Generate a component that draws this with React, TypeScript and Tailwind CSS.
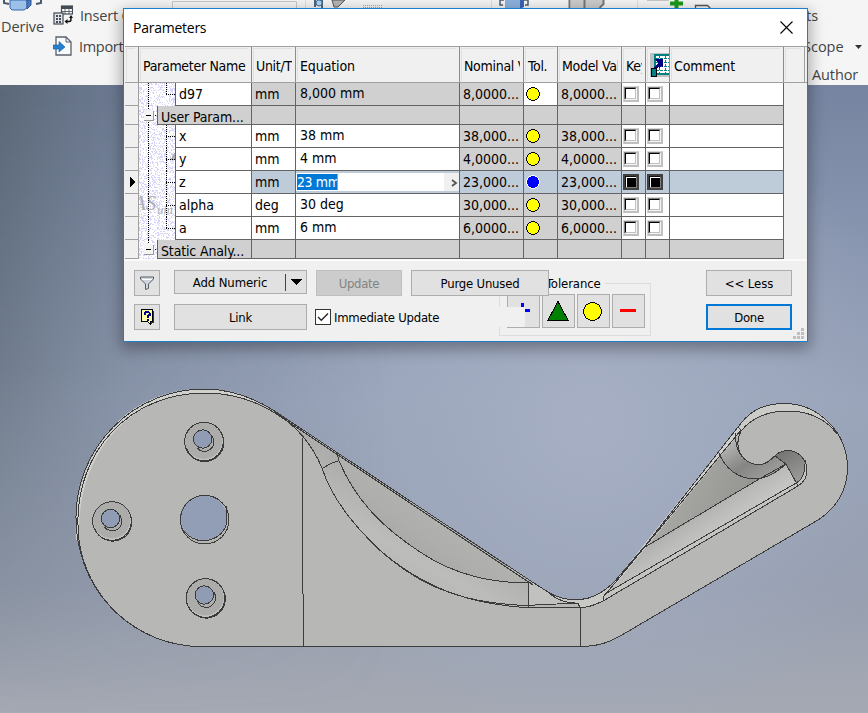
import React from "react";

const TAHOMA = "font-['DejaVu_Sans_Condensed','DejaVu_Sans',sans-serif]";
const SEGOE = "font-['Open_Sans','Noto_Sans',sans-serif]";

type Row = {
  name: string;
  group?: boolean;
  unit?: string;
  eq?: string;
  value?: string;
  selected?: boolean;
  readOnly?: boolean;
};

const rows: Row[] = [
  { name: "d97", unit: "mm", eq: "8,000 mm", value: "8,0000...", readOnly: true },
  { name: "User Param...", group: true },
  { name: "x", unit: "mm", eq: "38 mm", value: "38,000..." },
  { name: "y", unit: "mm", eq: "4 mm", value: "4,0000..." },
  { name: "z", unit: "mm", eq: "23 mm", value: "23,000...", selected: true },
  { name: "alpha", unit: "deg", eq: "30 deg", value: "30,000..." },
  { name: "a", unit: "mm", eq: "6 mm", value: "6,0000..." },
  { name: "Static Analy...", group: true },
];

const COLS = "grid grid-cols-[14px_113px_44px_164px_64px_34px_64px_24px_24px_114px_21px]";

function speckles(seed: number, w: number, h: number) {
  let s = seed * 7919 + 13;
  let d = "";
  for (let y = 0; y < h; y++) {
    for (let x = 0; x < w; x++) {
      s = (s * 1103515245 + 12345) % 2147483648;
      if (s / 2147483648 < 0.3) d += `M${x} ${y + 0.5}h1`;
    }
  }
  return d;
}

function Tree({ index, row }: { index: number; row: Row }) {
  const w = row.group ? 18 : 36;
  const h = row.group ? 19 : 23;
  const mid = row.group ? 9.5 : 11.5;
  const last = row.name === "d97" || row.name === "a";
  return (
    <svg width={w} height={h} className="block shrink-0 bg-white" shapeRendering="crispEdges">
      <path d={speckles(index + 1, w, h)} stroke="#d7d4fb" strokeWidth="1" />
      {row.name === "alpha" && (
        <g fill="#b0b0b0" fontFamily="Liberation Serif, serif" fontStyle="italic">
          <text x="-6" y="16" fontSize="21">AS</text>
          <text x="18" y="20" fontSize="13">um</text>
        </g>
      )}
      {row.name === "y" && <path d="M31 12l5-8v8z" fill="#b0b0b0" />}
      <path
        d={`M9.500 0V${row.name.startsWith("Static") ? 9 : h}`}
        stroke="#000"
        strokeDasharray="1 1"
      />
      {row.group ? (
        <>
          <path d={`M14 ${mid}h4`} stroke="#000" strokeDasharray="1 1" />
          <rect x="5" y="4" width="9" height="10" fill="#f4f4f4" />
          <path d="M5 14.500h9.500v-10" stroke="#999" fill="none" />
          <path d="M7 9.500h5" stroke="#000" />
        </>
      ) : (
        <path
          d={`M27.500 0V${last ? mid : h}M27 ${mid}h9`}
          stroke="#000"
          strokeDasharray="1 1"
          fill="none"
        />
      )}
    </svg>
  );
}

function Dot({ selected }: { selected?: boolean }) {
  return (
    <svg width="14" height="14" className="ml-[2px]" shapeRendering="crispEdges">
      <circle
        cx="7"
        cy="7"
        r="6.400"
        fill={selected ? "#0000ff" : "#ffff00"}
        stroke={selected ? "#fff" : "#000"}
      />
    </svg>
  );
}

function Check({ selected }: { selected?: boolean }) {
  if (selected)
    return (
      <div className="ml-px flex h-4 w-4 items-center justify-center bg-[#404040]">
        <div className="h-3 w-3 border border-[#808080] border-l-[#111] border-t-[#111] bg-black">
          <div className="h-full w-full border-l border-t border-white" />
        </div>
      </div>
    );
  return (
    <div className="ml-px h-4 w-4 border-b-2 border-l border-r-2 border-t border-[#c0c0c0] border-l-[#d8d8d8] border-t-[#d8d8d8]">
      <div className="h-[13px] w-[13px] border border-[#f4f4f4] border-l-[#808080] border-t-[#808080] bg-white">
        <div className="h-full w-full border border-[#c0c0c0] border-l-black border-t-black" />
      </div>
    </div>
  );
}

function Cell({ bg, children }: { bg: string; children?: React.ReactNode }) {
  return (
    <div
      className={`flex min-w-0 items-center overflow-hidden whitespace-nowrap border-b border-r border-[#646464] ${bg}`}
    >
      {children}
    </div>
  );
}

function ParamRow({ row, index }: { row: Row; index: number }) {
  const sel = row.selected ? "bg-[#becbd9]" : "";
  const gray = sel || "bg-[#d0d0d0]";
  const white = sel || (row.group ? "bg-[#d0d0d0]" : "bg-white");
  const ro = row.readOnly ? "bg-[#d0d0d0]" : white;
  return (
    <div className={`${COLS} ${row.group ? "h-[19px]" : "h-[23px]"}`}>
      <div className="flex items-center border-b border-r border-[#a0a0a0] bg-[#f0f0f0] pl-[5px]">
        {row.selected && (
          <svg width="6" height="10" shapeRendering="crispEdges">
            <path d="M0 0l5 5-5 5z" />
          </svg>
        )}
      </div>
      <div className="flex min-w-0 overflow-hidden border-r border-[#646464]">
        <Tree index={index} row={row} />
        <div
          className={`flex flex-1 items-center whitespace-nowrap border-b border-l border-[#646464] pl-[3px] ${
            row.group ? "bg-[#d0d0d0] pt-[3px]" : "bg-white"
          }`}
        >
          <span className={row.group ? "tracking-[-0.15px]" : ""}>{row.name}</span>
        </div>
      </div>
      <Cell bg={row.readOnly ? gray : white}>
        <span className="pl-[3px]">{row.unit}</span>
      </Cell>
      {row.selected ? (
        <Cell bg="bg-[#becbd9]">
          <div className="flex h-[18px] w-full items-center bg-white pl-px">
            <span className="flex h-4 w-[40px] items-center bg-[#0078d7] tracking-[-0.4px] text-white">
              {row.eq}
            </span>
            <span className="h-4 w-px bg-[#ff8728]" />
            <span className="ml-auto flex h-full w-[15px] items-center justify-end bg-[#f0f0f0] pr-px pt-[2px]">
              <svg width="7" height="8" fill="none" stroke="#555" strokeWidth="1.800">
                <path d="M1 1l4 3-4 3" />
              </svg>
            </span>
          </div>
        </Cell>
      ) : (
        <Cell bg={ro}>
          <span className="pb-[2px] pl-1">{row.eq}</span>
        </Cell>
      )}
      <Cell bg={gray}>
        <span className="pl-[3px]">{row.value}</span>
      </Cell>
      <Cell bg={row.readOnly ? "bg-white" : gray}>{!row.group && <Dot selected={row.selected} />}</Cell>
      <Cell bg={gray}>
        <span className="pl-[3px]">{row.value}</span>
      </Cell>
      <Cell bg={white}>{!row.group && <Check selected={row.selected} />}</Cell>
      <Cell bg={white}>{!row.group && <Check selected={row.selected} />}</Cell>
      <Cell bg={white} />
      <div className="bg-[#f0f0f0]" />
    </div>
  );
}

function HeaderCell({
  children,
  last,
  flush,
}: {
  children?: React.ReactNode;
  last?: boolean;
  flush?: boolean;
}) {
  return (
    <div
      className={`flex min-w-0 border-r bg-[#f0f0f0] ${last ? "border-[#a0a0a0]" : "border-[#8c8c8c]"}`}
    >
      <div
        className={`mb-px ml-px mt-px flex min-w-0 flex-1 items-center overflow-hidden whitespace-nowrap border-l border-t border-[#e0e0e0] pl-[2px] ${
          flush ? "" : "mr-[3px] pt-[2px]"
        }`}
      >
        {children}
      </div>
    </div>
  );
}

function ExportIcon() {
  return (
    <svg width="20" height="24" className="shrink-0" shapeRendering="crispEdges">
      <rect x="0" y="0" width="20" height="24" fill="#c0c0c0" />
      <rect x="4" y="1" width="16" height="20" fill="#fff" />
      <path d="M4.500 1v20M4 1.500h16M4 20.500h16" stroke="#008080" strokeWidth="2" />
      <path d="M6 5.500h14M6 9.500h14M6 13.500h14M6 17.500h14" stroke="#008080" strokeDasharray="3 1" />
      <path d="M9.500 3v17M15.500 3v17" stroke="#008080" strokeDasharray="2 2" />
      <path d="M5 16l6-7" stroke="#000080" strokeWidth="3" />
      <path d="M5 6h8v9l-2-2-2 2-3-3 2-2z" fill="#000080" />
      <rect x="1.500" y="15" width="5" height="8" fill="#008080" stroke="#000" />
    </svg>
  );
}

function Button({ className, children }: { className: string; children?: React.ReactNode }) {
  return (
    <div className={`flex shrink-0 items-center justify-center border ${className}`}>
      {children}
    </div>
  );
}

function ToleranceGroup() {
  return (
    <div className="absolute left-[375px] top-[15px] h-[62px] w-[152px]">
      <div className="absolute inset-x-0 bottom-0 top-[9px] border border-[#dcdcdc]" />
      <div className="absolute left-[47px] top-px bg-[#f0f0f0] pr-1 leading-[18px] tracking-[-0.1px]">
        Tolerance
      </div>
      <div className="absolute left-[8px] top-[20px] flex gap-[2px]">
        <Button className="h-[34px] w-[33px] border-[#adadad] bg-[#e1e1e1]">
          <svg width="31" height="32" shapeRendering="crispEdges">
            <path d="M0 12h17v20H0z" fill="#f0f0f0" />
            <path d="M13 8h3v4h-3zM17 14h5v3h-5z" fill="#00f" />
          </svg>
        </Button>
        <Button className="h-[34px] w-[33px] border-[#adadad] bg-[#e1e1e1] pr-px">
          <svg width="24" height="22" shapeRendering="crispEdges">
            <path d="M12 1.500L22 20H2z" fill="#008000" stroke="#000" />
          </svg>
        </Button>
        <Button className="h-[34px] w-[33px] border-[#adadad] bg-[#e1e1e1] pr-[2px]">
          <svg width="19" height="19" shapeRendering="crispEdges">
            <circle cx="9.500" cy="9.500" r="9" fill="#ff0" stroke="#000" />
          </svg>
        </Button>
        <Button className="h-[34px] w-[33px] border-[#adadad] bg-[#e1e1e1] pr-px">
          <div className="h-[3px] w-4 -translate-y-px bg-[#ff0000]" />
        </Button>
      </div>
      <div className="absolute -left-px top-[33px] h-5 w-[10px] bg-[#f0f0f0]" />
    </div>
  );
}

function Dialog() {
  return (
    <div className="absolute left-[123px] top-[8px] flex h-[334px] w-[685px] flex-col border border-[#1a7fcd] bg-[#f0f0f0] shadow-[0_5px_14px_2px_rgba(0,0,0,0.32)]">
      <div
        className={`flex h-[37px] shrink-0 items-center justify-between bg-white pl-[9px] pr-[14px] ${SEGOE}`}
      >
        <span className="text-[14px] tracking-[-0.25px]">Parameters</span>
        <svg width="13" height="13" stroke="#000" fill="none" strokeWidth="1.100">
          <path d="M.5.5l12 12M12.500.5l-12 12" />
        </svg>
      </div>
      <div className={`ml-px text-[14px] leading-[16px] ${TAHOMA}`}>
        <div className={`${COLS} h-[37px] border-b border-t border-[#a0a0a0] tracking-[-0.3px]`}>
          <HeaderCell />
          <HeaderCell>Parameter Name</HeaderCell>
          <HeaderCell>Unit/T</HeaderCell>
          <HeaderCell>
            <span className="tracking-[-0.1px]">Equation</span>
          </HeaderCell>
          <HeaderCell>Nominal V</HeaderCell>
          <HeaderCell>Tol.</HeaderCell>
          <HeaderCell>Model Val</HeaderCell>
          <HeaderCell>Key</HeaderCell>
          <HeaderCell flush>
            <ExportIcon />
          </HeaderCell>
          <HeaderCell>
            <span className="tracking-[-0.1px]">Comment</span>
          </HeaderCell>
          <HeaderCell last />
        </div>
        {rows.map((r, i) => (
          <ParamRow key={r.name} row={r} index={i} />
        ))}
      </div>
      <div className={`relative flex-1 text-[13px] leading-[16px] ${TAHOMA}`}>
        <div className="h-[2px] bg-[#fafafa]" />
        <ToleranceGroup />
        <div className="relative flex pl-[10px] pt-[9px]">
          <Button className="h-[26px] w-[26px] border-[#adadad] bg-[#e1e1e1]">
            <svg width="16" height="16" fill="none">
              <path d="M1.500 2h13v2L9.500 9v4.500l-3 1V9l-5-5z" fill="#cfd6de" stroke="#56606b" />
              <path d="M3 4.500h10" stroke="#fff" />
            </svg>
          </Button>
          <Button className="ml-[14px] h-6 w-[133px] border-[#adadad] bg-[#e1e1e1]">
            <span className="flex-1 pt-px text-center tracking-[-0.1px]">Add Numeric</span>
            <span className="h-[17px] w-px bg-[#444]" />
            <svg width="20" height="8" shapeRendering="crispEdges">
              <path d="M4 1h12l-6 6z" />
            </svg>
          </Button>
          <Button className="ml-[9px] h-[26px] w-[86px] border-[#bfbfbf] bg-[#cccccc] pt-[2px] tracking-[-0.3px] text-[#838383]">
            Update
          </Button>
          <Button className="ml-[9px] h-[26px] w-[138px] border-[#adadad] bg-[#e1e1e1] pt-[2px] tracking-[-0.2px]">
            Purge Unused
          </Button>
          <Button className="ml-[157px] h-[26px] w-[86px] border-[#adadad] bg-[#e1e1e1] pt-[2px] tracking-[-0.1px]">
            &lt;&lt; Less
          </Button>
        </div>
        <div className="relative mt-2 flex w-[320px] items-center pl-[10px]">
          <Button className="h-[26px] w-[26px] border-[#adadad] bg-[#e1e1e1]">
            <svg width="16" height="18" shapeRendering="crispEdges">
              <path d="M2.500 1.500h11v12h-2v2.500l-3-2.500h-6z" fill="#ffffa8" stroke="#000" />
              <path d="M14.500 3v11h-2v2" stroke="#333" fill="none" />
              <path
                d="M5.500 6.500V5l1-1h3l1 1v2L8.500 8.500V10M8.500 11v1.500"
                stroke="#00008b"
                strokeWidth="2"
                fill="none"
              />
            </svg>
          </Button>
          <Button className="ml-[14px] h-[26px] w-[133px] border-[#adadad] bg-[#e1e1e1] pt-[2px] tracking-[-0.2px]">
            Link
          </Button>
          <div className="ml-2 flex h-4 w-4 shrink-0 items-center justify-center border border-[#333] bg-white">
            <svg width="12" height="10" fill="none" stroke="#222" strokeWidth="1.300">
              <path d="M1 5l3.300 3.300L11 1.500" />
            </svg>
          </div>
          <span className="ml-[3px] whitespace-nowrap pt-[2px] tracking-[-0.25px]">
            Immediate Update
          </span>
        </div>
        <div className="absolute left-[582px] top-[45px]">
          <Button className="h-[26px] w-[86px] border-2 border-[#0078d7] bg-[#e1e1e1] pt-[2px] tracking-[-0.3px]">
            Done
          </Button>
        </div>
        <svg width="11" height="11" className="absolute bottom-[2px] right-[3px]" fill="#bfbfbf">
          <path d="M8 0h3v3H8zM4 4h3v3H4zM8 4h3v3H8zM0 8h3v3H0zM4 8h3v3H4zM8 8h3v3H8z" />
        </svg>
      </div>
    </div>
  );
}

function Ribbon() {
  return (
    <div className={`flex h-[85px] bg-[#f5f5f5] text-[14.5px] leading-5 text-[#444] ${SEGOE}`}>
      <div className="flex w-[124px] shrink-0 overflow-hidden">
        <div className="flex w-[50px] flex-col">
          <svg width="50" height="17">
            <path d="M4 0v3l5 1M41 0v3l-5 1" stroke="#4a5a70" strokeWidth="2" fill="none" />
            <path d="M10 0h17v8l-3 2H12l-2-2z" fill="#9cc0e8" stroke="#3a68ac" />
            <path d="M27 0h4v5l-4 4z" fill="#4b79bd" stroke="#2f5698" />
          </svg>
          <span className="pl-px tracking-[-0.1px]">Derive</span>
        </div>
        <div className="flex flex-col gap-[11px] pl-[3px] pt-[6px]">
          <div className="flex h-5 items-center gap-[7px] whitespace-nowrap">
            <svg width="20" height="20" className="-translate-y-px" fill="none" stroke="#444b55" strokeWidth="1.200">
              <rect x="8.500" y="1" width="11" height="8" fill="#fff" />
              <path d="M8 2.500h12" strokeWidth="3" />
              <path d="M12 3v6M16 3v6M8.500 6.500h11" strokeWidth=".8" />
              <rect x="1" y="8" width="9" height="11" fill="#e3e6ea" />
              <path d="M3 11h2M3 14h2M3 17h2M6 11h2M6 14h2M6 17h2" strokeWidth="2" />
              <path d="M13 16.500h3c2 0 2-1 2-4" stroke="#111" strokeWidth="1.500" />
              <path d="M11.500 16.500l3-2.500v5zM18 10l2 3h-4z" fill="#111" stroke="none" />
            </svg>
            <span className="tracking-[-0.2px]">Insert C</span>
          </div>
          <div className="flex h-5 items-center gap-[6px]">
            <svg width="20" height="20" className="-translate-y-px" fill="none">
              <path d="M3 1h10l5 5v13H3z" fill="#f8fafc" stroke="#59616b" strokeWidth="1.300" />
              <path d="M13 1v5h5" stroke="#59616b" />
              <path d="M0 9h6V5.500l6 5.500-6 5V13H0z" fill="#2481d1" stroke="#155c9f" strokeWidth=".6" />
            </svg>
            <span className="tracking-[-0.3px]">Import</span>
          </div>
        </div>
      </div>
      <svg width="683" height="9" viewBox="124 0 683 9" className="shrink-0" fill="none">
        <path d="M172.500 9V1.500h124V9" stroke="#c8c8c8" />
        <path d="M305.500 0v9M491.500 0v9M637.500 0v9" stroke="#ddd" />
        <path d="M315 0v7M322 0v9" stroke="#50647f" strokeWidth="2" />
        <circle cx="319" cy="3" r="3" stroke="#3974a9" fill="#b6d4e6" />
        <path d="M332 0h13l-7 7h-4z" fill="#b5b5b5" stroke="#555" />
        <path d="M363 5.500h19M363 7.500h19" stroke="#aaa" strokeDasharray="1 1" />
        <path d="M504 0h-4v5h3M524 0h4v5h-3" stroke="#4d5c70" strokeWidth="1.500" />
        <path d="M505 0h15v9h-15z" fill="#8db1dd" />
        <path d="M520 0h4v7l-4 2z" fill="#3b64b4" />
        <path d="M571 0h32v5l-3 4h-29z" fill="#cbcbcb" />
        <path d="M569.500 9V0M584.500 0v9M603.500 0v4l-4 4" stroke="#777" strokeWidth="2" />
        <path d="M647 .5h22" stroke="#c8c8c8" />
        <path d="M676.500 0v8M670 3.500h13" stroke="#1c9a1c" strokeWidth="4" />
        <path d="M695.500 9V5.500h12l3 3" stroke="#555" strokeWidth="1.300" />
      </svg>
      <div className="relative flex-1">
        <div className="flex flex-col pt-[6px]">
          <span className="-ml-px">ts</span>
          <div className="-ml-[4px] mt-[11px] flex items-center justify-between pr-[6px]">
            <span>Scope</span>
            <svg width="7" height="4">
              <path d="M0 0h7L3.500 4z" fill="#333" />
            </svg>
          </div>
          <span className="mt-[8px] pl-[5px] tracking-[-0.1px]">Author</span>
        </div>
      </div>
    </div>
  );
}

const HOLES = [
  { x: 204, y: 441.5, hx: 202.7, hy: 439 },
  { x: 112, y: 521, hx: 110.5, hy: 518.5 },
  { x: 205.5, y: 598, hx: 204.3, hy: 595 },
];

const OUTLINE =
  "M190 646C125 640 76 585 76 518A128.500 128.500 0 0 1 204 389C231 389 252 397 273 410L533 582.500L548 592C562 601 584 603 600 593C607 589 611 585 615 581L645 546L738 427C746 416 758 403.500 784 403.500C819 403.500 847.500 433 847.500 468C847.500 492 834 510 818 520L627 632C613 640 603 646.500 580 646.500L190 646.500Z";
const HOOK_TOP = "M741 431C750 420 765 411 788 411C810 411 827 420 837 434";
const HOOK_IN =
  "M741.500 430C737 438 737 446 740 453C745 462 754 466 763 464C774 461 774 451 788 450.500C799 451 807 460 807 470C807 478 803 483 798 486";
const FILLET =
  "M273 410C298 428 312 444 322 468C333 503 363 536 390 559C432 593 473 603 525 605.500";
const INNER = "M337 453L339 461C357 503 385 529 420 552C456 576 493 583 531 583";

function Viewport() {
  return (
    <div className="h-[628px] overflow-hidden bg-[#969fb2]">
      <svg width="868" height="628" viewBox="0 85 868 628" className="block" fill="none">
        <defs>
          <linearGradient id="sky" x1="0" y1="85" x2="0" y2="713" gradientUnits="userSpaceOnUse">
            <stop offset="0" stopColor="#7684a1" />
            <stop offset=".25" stopColor="#8996b0" />
            <stop offset=".5" stopColor="#98a3b9" />
            <stop offset=".8" stopColor="#979fb0" />
            <stop offset="1" stopColor="#a5a9b3" />
          </linearGradient>
          <linearGradient id="side" x1="0" y1="0" x2="868" y2="0" gradientUnits="userSpaceOnUse">
            <stop offset="0" stopColor="#505d68" stopOpacity=".72" />
            <stop offset=".15" stopColor="#5d6a7a" stopOpacity=".38" />
            <stop offset=".45" stopColor="#77839a" stopOpacity="0" />
          </linearGradient>
          <radialGradient id="glow" cx="590" cy="420" r="330" gradientUnits="userSpaceOnUse">
            <stop offset="0" stopColor="#a6afc4" />
            <stop offset=".5" stopColor="#a3adc2" stopOpacity=".6" />
            <stop offset="1" stopColor="#a0aabf" stopOpacity="0" />
          </radialGradient>
          <linearGradient id="fade" x1="0" y1="85" x2="0" y2="713" gradientUnits="userSpaceOnUse">
            <stop offset="0" stopColor="#fff" />
            <stop offset=".45" stopColor="#fff" stopOpacity=".75" />
            <stop offset="1" stopColor="#fff" stopOpacity="0" />
          </linearGradient>
          <mask id="fadeMask">
            <rect y="85" width="868" height="628" fill="url(#fade)" />
          </mask>
          <linearGradient id="band" x1="400" y1="590" x2="440" y2="520" gradientUnits="userSpaceOnUse">
            <stop offset="0" stopColor="#b5b5b3" />
            <stop offset=".45" stopColor="#bcbcba" />
            <stop offset="1" stopColor="#adadab" />
          </linearGradient>
          <linearGradient id="web" x1="390" y1="570" x2="445" y2="490" gradientUnits="userSpaceOnUse">
            <stop offset="0" stopColor="#a2a29f" />
            <stop offset=".5" stopColor="#aeaeac" />
            <stop offset="1" stopColor="#b6b6b3" />
          </linearGradient>
          <linearGradient id="floor" x1="680" y1="500" x2="710" y2="545" gradientUnits="userSpaceOnUse">
            <stop offset="0" stopColor="#9a9a98" />
            <stop offset=".5" stopColor="#b7b7b5" />
            <stop offset="1" stopColor="#cacac8" />
          </linearGradient>
          <linearGradient id="wall" x1="665" y1="460" x2="755" y2="500" gradientUnits="userSpaceOnUse">
            <stop offset="0" stopColor="#adadaa" />
            <stop offset="1" stopColor="#939390" />
          </linearGradient>
          <linearGradient id="bend" x1="725" y1="435" x2="755" y2="482" gradientUnits="userSpaceOnUse">
            <stop offset="0" stopColor="#c4c4c2" />
            <stop offset=".65" stopColor="#858583" />
            <stop offset="1" stopColor="#9a9a98" />
          </linearGradient>
          <linearGradient id="cup" x1="780" y1="452" x2="800" y2="486" gradientUnits="userSpaceOnUse">
            <stop offset="0" stopColor="#747472" />
            <stop offset="1" stopColor="#a0a09e" />
          </linearGradient>
        </defs>
        <rect y="85" width="868" height="628" fill="url(#sky)" />
        <rect y="85" width="868" height="628" fill="url(#glow)" />
        <rect y="85" width="868" height="628" fill="url(#side)" mask="url(#fadeMask)" />

        <path d={OUTLINE} fill="#b7b7b5" />
        <path
          d="M76 540C72 455 122 389 204 389C231 389 252 397 273 410C252 399 230 393 205 393C128 393 76 455 79 540Z"
          fill="#d0d0cd"
        />
        <path d={`${FILLET}L530 583L337 453L273 410Z`} fill="url(#band)" />
        <path d={`${INNER}L533 583L337 453Z`} fill="url(#web)" />
        <path d="M528 584L534 584L548 592Q562 602 578 603L529 606Z" fill="#c1c1bf" />
        <path
          d="M548 592C562 601 584 603 600 593L615 581L603 601Q592 608 580 608L578 603Q560 602 548 592Z"
          fill="#c9c9c6"
        />

        <path
          d="M738 427C746 416 758 403.500 784 403.500C812 403.500 829 418 837 434C827 420 810 411 788 411C765 411 750 420 741 431Z"
          fill="#cbcbc8"
        />
        <path d="M719 453L738 428L741 431Q735 445 743 458L760 478.500L645 547Z" fill="url(#wall)" />
        <path d="M645 547L760 478.500L786 464L798 485L603 601L605 594L615 583Z" fill="url(#floor)" />
        <path
          d="M719 453L741 430C737 438 737 446 740 453C745 462 754 466 763 464L775 456L786 464C776 473 766 479 755 479C739 479 725 469 719 453Z"
          fill="url(#bend)"
        />
        <path
          d="M775 456Q782 450 788 450.500C799 451 807 460 807 470C807 478 803 483 798 486L786 464Z"
          fill="url(#cup)"
        />
        <path d="M605 594L797 482.500Q806 477 805 462Q812 476 798 486L603 601Z" fill="#c4c4c1" />
        <path d="M615 581L738 427L741 431L616 584Z" fill="#d0d0cd" />

        {HOLES.map((h) => (
          <g key={h.y}>
            <circle cx={h.x} cy={h.y} r="19.300" fill="#c2c2c0" />
            <circle cx={h.x - 0.3} cy={h.y - 1} r="18.500" fill="#acacaa" />
            <circle cx={h.hx + 0.6} cy={h.hy + 1} r="9.300" fill="#b2b2b0" />
            <circle cx={h.hx} cy={h.hy} r="9" fill="#909cb3" />
          </g>
        ))}
        <circle cx="204.700" cy="519.700" r="24.300" fill="#b5b5b3" />
        <path d="M227 506Q229 519 222 530Q214 540 200 540L214 537Z" fill="#858583" />
        <ellipse cx="203.500" cy="517.700" rx="23.300" ry="22.300" fill="#929eb5" />

        <g stroke="#3b3b3b" strokeWidth="1" shapeRendering="crispEdges">
          <path d={OUTLINE} />
          <path d="M190 646C126 640 78 586 78 525C76 452 129 393 205 393C233 393 254 400 275 413" />
          <path d="M275 413L533 585M548 592.500Q562 604 578 603" />
          <path d="M302.500 438V540L303.500 646" />
          <path d={FILLET} />
          <path d="M375 546C425 591 474 604 525 607.500H580C589 608 597 604 603 601" />
          <path d={INNER} />
          <path d="M323 468Q330 463 338 461M528 583L529 607M525 605.500L578 603L580 608V646.500" />
          <path d={HOOK_TOP} />
          <path d={HOOK_IN} />
          <path d="M736 433Q734 446 742 457M738 427L741.500 431" />
          <path d="M798 486L603 601V597L615 583L741 430" />
          <path d="M605 594L797 482.500Q806 477 805 460" />
          <path d="M645 547L760 478.500L786 464" />
          <path d="M719 453C725 469 739 479 755 479C766 479 776 473 786 464" />
          <path d="M775 456L786 464L791 473L798 486" />
          {HOLES.map(({ x, y, hx, hy }) => (
            <g key={y}>
              <circle cx={x} cy={y} r="19.300" />
              <path d={`M${x + 18.5} ${y - 6}A18.500 18.500 0 0 1 ${x - 17} ${y + 8}`} />
              <circle cx={hx} cy={hy} r="9.200" />
              <path d={`M${hx + 9.5} ${hy - 3}A9.600 9.600 0 0 1 ${hx - 6} ${hy + 8.5}`} />
            </g>
          ))}
          <circle cx="204.700" cy="519.700" r="24.300" />
          <path d="M226.500 506V524C221 542 197 547 184 531" />
        </g>
      </svg>
    </div>
  );
}

export default function App() {
  return (
    <div className="relative h-[713px] w-[868px] overflow-hidden text-black">
      <Ribbon />
      <Viewport />
      <Dialog />
    </div>
  );
}
